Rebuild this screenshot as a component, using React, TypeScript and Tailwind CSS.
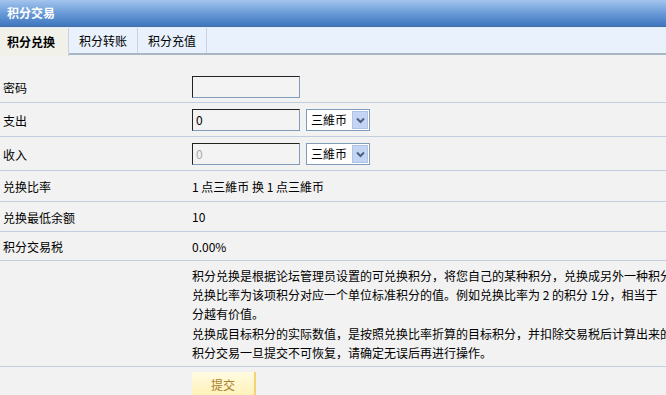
const font = { fontFamily: '"Noto Sans CJK SC", "Liberation Sans", sans-serif' };

const Row = ({ label, children, h = "h-[31px]" }: { label: string; children?: React.ReactNode; h?: string }) => (
  <div className={`flex items-center ${h} border-b border-[#c3cde0]`}>
    <div className="w-[192px] pl-[3px] shrink-0 pt-[2px]">{label}</div>
    <div className="flex items-center gap-[6px] pt-[1px]">{children}</div>
  </div>
);

const Input = ({ value, disabled }: { value?: string; disabled?: boolean }) => (
  <div
    className={`w-[108px] h-[22px] border-t border-l border-t-[#222] border-l-[#222] border-b border-r border-b-[#7f9db9] border-r-[#7f9db9] bg-[#f3f3f3] flex items-center px-[3px] ${
      disabled ? "text-[#aaa]" : "text-black"
    }`}
  >
    {value}
  </div>
);

const Select = () => (
  <div className="w-[64px] h-[22px] border border-[#7f9db9] bg-white flex items-center justify-between pl-[4px] pr-[1px]">
    <span>三維币</span>
    <span className="w-[16px] h-[18px] bg-[#c3d5f3] border border-[#b0c4e8] flex items-center justify-center">
      <svg width="9" height="7" viewBox="0 0 9 7">
        <path d="M1 1.5 L4.5 5 L8 1.5" stroke="#4d6185" strokeWidth="2" fill="none" />
      </svg>
    </span>
  </div>
);

export default function App() {
  return (
    <div className="w-[666px] h-[395px] overflow-hidden bg-[#f2f2f2] text-[12px] text-black" style={font}>
      <div className="h-[27px] bg-gradient-to-b from-[#a4c5ee] via-[#6a9bd8] to-[#3e77be] flex items-center pl-[7px] text-white font-bold border-b border-[#4a6fa0]">
        积分交易
      </div>
      <div className="h-[28px] bg-[#e8f1fc] border-t border-[#dcefff] border-b-2 border-b-[#a9b6c4] flex">
        <div className="w-[69px] bg-[#f1f1ea] font-bold flex items-center pl-[7px] border-r border-[#c8d4e4] h-[28px]">积分兑换</div>
        <div className="w-[69px] flex items-center justify-center border-r border-[#c8d4e4]">积分转账</div>
        <div className="w-[69px] flex items-center justify-center border-r border-[#c8d4e4]">积分充值</div>
      </div>
      <div className="pt-[16px]">
        <Row label="密码" h="h-[32px]">
          <Input />
        </Row>
        <Row label="支出" h="h-[34px]">
          <Input value="0" />
          <Select />
        </Row>
        <Row label="收入" h="h-[34px]">
          <Input value="0" disabled />
          <Select />
        </Row>
        <Row label="兑换比率">1 点三維币 换 1 点三維币</Row>
        <Row label="兑换最低余额" h="h-[30px]">10</Row>
        <Row label="积分交易税" h="h-[29px]">0.00%</Row>
        <div className="flex h-[106px] border-b border-[#c3cde0] pt-[5px]">
          <div className="w-[192px] shrink-0" />
          <div className="leading-[19px] min-w-0 overflow-hidden">
            <p className="whitespace-nowrap">积分兑换是根据论坛管理员设置的可兑换积分，将您自己的某种积分，兑换成另外一种积分</p>
            <p className="whitespace-nowrap">兑换比率为该项积分对应一个单位标准积分的值。例如兑换比率为 2 的积分 1分，相当于</p>
            <p>分越有价值。</p>
            <p className="mt-[1px] whitespace-nowrap">兑换成目标积分的实际数值，是按照兑换比率折算的目标积分，并扣除交易税后计算出来的</p>
            <p>积分交易一旦提交不可恢复，请确定无误后再进行操作。</p>
          </div>
        </div>
        <div className="pl-[192px] pt-[5px]">
          <button className="w-[64px] h-[26px] bg-gradient-to-b from-[#fffbe2] to-[#fff0b4] border-r-2 border-[#f5d272] text-[#a9802a] flex items-center justify-center">
            提交
          </button>
        </div>
      </div>
    </div>
  );
}
